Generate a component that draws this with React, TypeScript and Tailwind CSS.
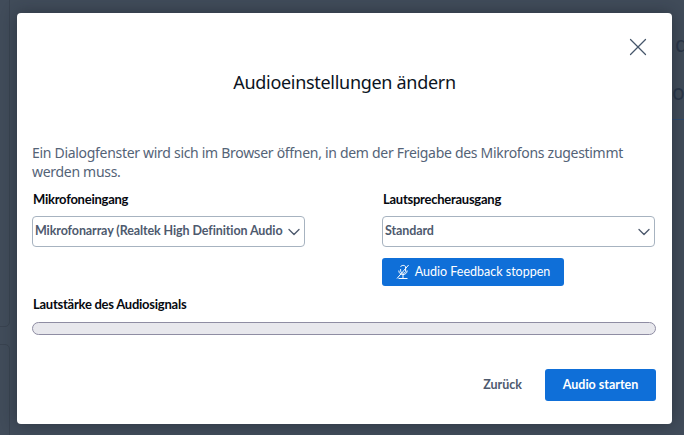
import type { ReactNode } from "react";
import { X, ChevronDown } from "lucide-react";

function MicOff() {
  return (
    <svg width="14" height="16" viewBox="0 0 14 16" fill="none" stroke="currentColor" strokeWidth="1" className="mr-[5px] shrink-0">
      <path d="M4.6 3 C5 1 9 0.8 9.6 2.8 L9.6 7.5 C9.2 9.4 6.6 9.8 5.3 8.6 C4.6 8 4.6 6 4.6 5" />
      <path d="M2.8 6.5 C2.8 12 11 12 11.2 6.5" />
      <path d="M1 14.5 L12.6 1" />
      <path d="M7 11 L7 14.5 M2.5 14.5 L11.5 14.5" />
    </svg>
  );
}

function Field({ label, value, children }: { label: string; value: string; children?: ReactNode }) {
  return (
    <div className="flex flex-col w-[273px]">
      <div className="pl-px font-['Lato',sans-serif] text-[13px] leading-[18px] font-bold tracking-[-0.25px] text-[#06090f] mb-[8px]">{label}</div>
      <div className="h-[31px] w-full rounded-[4px] border border-[#a7b3c0] bg-white flex items-center justify-between pl-[2px]">
        <span className="font-['Lato',sans-serif] text-[12.5px] font-bold tracking-[-0.1px] text-[#4e5a6e] whitespace-nowrap">{value}</span>
        <ChevronDown size={20} strokeWidth={1.6} className="text-[#4e5a6e] shrink-0" />
      </div>
      {children}
    </div>
  );
}

export default function App() {
  return (
    <div className="relative w-[684px] h-[435px] overflow-hidden bg-[#414c5a] font-['Noto_Sans',sans-serif]">
      <div className="absolute left-[-10px] top-[-20px] w-[20px] h-[347px] rounded-[5px] border border-[#394350]" />
      <div className="absolute left-[-10px] top-[344px] w-[20px] h-[130px] rounded-[5px] border border-[#394350]" />
      <div className="absolute left-[675px] top-[29px] text-[21px] leading-[30px] text-[#2a3648] w-[9px] overflow-hidden">d</div>
      <div className="absolute left-[672px] top-[77px] text-[21px] leading-[30px] text-[#2a3648] w-[12px] overflow-hidden">oc</div>
      <div className="absolute left-[672px] top-[119px] h-px w-[12px] bg-[#2f4a6e]" />
      <div className="absolute left-[17px] top-[13px] w-[655px] h-[411px] bg-white rounded-[4px] flex flex-col px-[15px] shadow-[0_0_16px_rgba(20,26,36,0.45)]">
        <div className="absolute right-[19px] top-[19px] text-[#46566a]">
          <X size={30} strokeWidth={1} />
        </div>
        <div className="mt-[55px] text-center text-[18px] leading-[28px] tracking-[-0.3px] text-[#0c1422]">Audioeinstellungen ändern</div>
        <div className="mt-[47px] text-[14px] leading-[19px] tracking-[-0.3px] text-[#546377] w-[620px]">
          Ein Dialogfenster wird sich im Browser öffnen, in dem der Freigabe des Mikrofons zugestimmt werden muss.
        </div>
        <div className="mt-[9px] flex gap-[77px]">
          <Field label="Mikrofoneingang" value="Mikrofonarray (Realtek High Definition Audio" />
          <Field label="Lautsprecherausgang" value="Standard">
            <button className="mt-[11px] w-[182px] h-[28px] rounded-[3px] bg-[#0f6fd8] text-white font-['Lato',sans-serif] text-[12.5px] flex items-center justify-center">
              <MicOff />
              Audio Feedback stoppen
            </button>
          </Field>
        </div>
        <div className="mt-[9px] pl-px font-['Lato',sans-serif] text-[13px] leading-[18px] font-bold tracking-[-0.25px] text-[#06090f]">Lautstärke des Audiosignals</div>
        <div className="mt-[9px] h-[13px] w-[624px] rounded-full border border-[#8f8da3] bg-[#e8e8ed]" />
        <div className="mt-[34px] flex items-center justify-end w-[624px] font-['Lato',sans-serif]">
          <span className="text-[12.5px] font-bold text-[#4e5a6e] mr-[23px]">Zurück</span>
          <button className="w-[111px] h-[32px] rounded-[3px] bg-[#0f6fd8] text-white text-[12.5px] font-bold">Audio starten</button>
        </div>
      </div>
    </div>
  );
}
